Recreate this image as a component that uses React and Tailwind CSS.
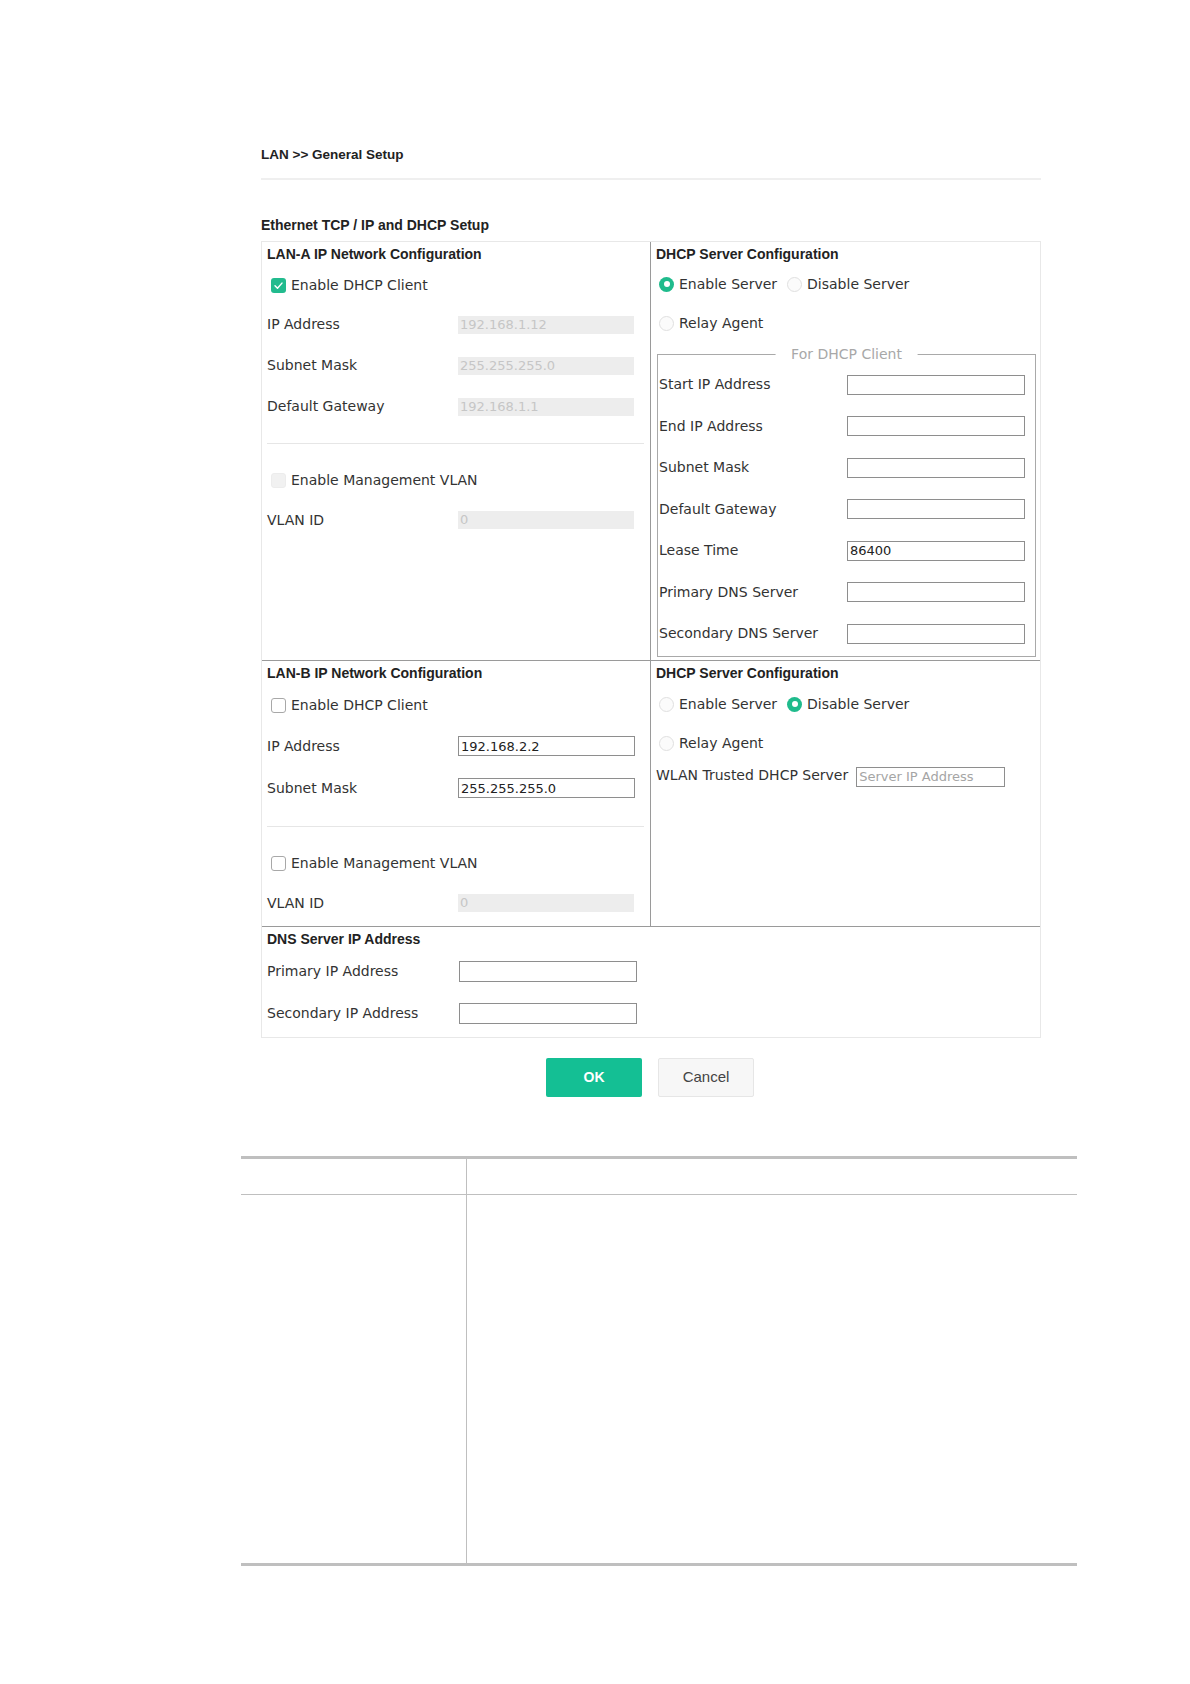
import React from "react";

const label = "font-['DejaVu_Sans',sans-serif] text-[14px] text-[#333] whitespace-nowrap";
const headFont = "font-['Liberation_Sans',Arial,sans-serif] font-bold text-[#222] whitespace-nowrap";
const heading = `${headFont} text-[14px]`;

const Check = ({ state }) => {
  if (state === "on") {
    return (
      <span className="flex h-[15px] w-[15px] items-center justify-center rounded-[3px] bg-[#22bb8e]">
        <svg width="11" height="11" viewBox="0 0 12 12" fill="none">
          <path d="M2.2 6.3 L4.9 8.9 L9.8 3.4" stroke="#fff" strokeWidth="1.6" strokeLinecap="round" strokeLinejoin="round" />
        </svg>
      </span>
    );
  }
  if (state === "disabled") {
    return <span className="block h-[15px] w-[15px] rounded-[3px] border border-[#ececec] bg-[#f1f1f1]" />;
  }
  return <span className="block h-[15px] w-[15px] rounded-[3px] border border-[#a8a8a8] bg-white" />;
};

const Radio = ({ on }) =>
  on ? (
    <span className="flex h-[15px] w-[15px] items-center justify-center rounded-full bg-[#1fbb8c]">
      <span className="block h-[6px] w-[6px] rounded-full bg-white" />
    </span>
  ) : (
    <span className="block h-[15px] w-[15px] rounded-full border border-[#e0e0e0] bg-[#fbfbfb]" />
  );

const Field = ({ value = "", disabled, w = "w-[176px]", h = "h-[20px]", placeholder }) =>
  disabled ? (
    <div className={`${w} ${h} flex items-center bg-[#ededed] pl-[2px] font-['DejaVu_Sans',sans-serif] text-[13px] text-[#c6c6c6]`}>
      {value}
    </div>
  ) : (
    <input
      readOnly
      value={value}
      placeholder={placeholder}
      className={`${w} ${h} box-border border border-[#8e8e8e] bg-white px-[2px] font-['DejaVu_Sans',sans-serif] text-[13px] text-[#222] outline-none placeholder:text-[#a5a5a5]`}
    />
  );

const Row = ({ name, lw = "w-[191px]", height = "h-[41px]", children }) => (
  <div className={`flex ${height} items-center`}>
    <span className={`${label} ${lw} shrink-0`}>{name}</span>
    {children}
  </div>
);

const CheckRow = ({ state, text, height }) => (
  <div className={`flex ${height} items-center pl-[4px]`}>
    <Check state={state} />
    <span className={`${label} ml-[5px]`}>{text}</span>
  </div>
);

const ServerRadios = ({ enabled, height }) => (
  <div className={`flex ${height} items-center pl-[3px]`}>
    <Radio on={enabled} />
    <span className={`${label} ml-[5px]`}>Enable Server</span>
    <span className="ml-[10px]">
      <Radio on={!enabled} />
    </span>
    <span className={`${label} ml-[5px]`}>Disable Server</span>
  </div>
);

export default function App() {
  return (
    <div className="min-h-[1684px] w-[1190px] bg-white">
      <div className="ml-[261px] w-[780px] pt-[145px]">
        <div className={`${headFont} text-[13.5px] leading-[20px]`}>LAN &gt;&gt; General Setup</div>
        <div className="mt-[13px] h-[2px] bg-[#efefef]" />
        <div className={`${heading} mt-[35px] leading-[20px]`}>Ethernet TCP / IP and DHCP Setup</div>

        <div className="mt-[6px] border border-[#e8e8e8]">
          {/* LAN-A */}
          <div className="grid grid-cols-[389px_389px] border-b border-[#9a9a9a]">
            <div className="h-[418px] border-r border-[#9a9a9a] pl-[5px] pr-[6px]">
              <div className={`${heading} flex h-[24px] items-center`}>LAN-A IP Network Configuration</div>
              <CheckRow state="on" text="Enable DHCP Client" height="h-[38px]" />
              <Row name="IP Address">
                <Field disabled value="192.168.1.12" h="h-[18px]" />
              </Row>
              <Row name="Subnet Mask">
                <Field disabled value="255.255.255.0" h="h-[18px]" />
              </Row>
              <Row name="Default Gateway">
                <Field disabled value="192.168.1.1" h="h-[18px]" />
              </Row>
              <div className="mt-[16px] h-px bg-[#e6e6e6]" />
              <div className="mt-[16px]">
                <CheckRow state="disabled" text="Enable Management VLAN" height="h-[40px]" />
                <Row name="VLAN ID" height="h-[40px]">
                  <Field disabled value="0" h="h-[18px]" />
                </Row>
              </div>
            </div>

            <div className="h-[418px] pl-[5px] pr-[4px]">
              <div className={`${heading} flex h-[24px] items-center`}>DHCP Server Configuration</div>
              <ServerRadios enabled height="h-[36px]" />
              <div className="flex h-[42px] items-center pl-[3px]">
                <Radio />
                <span className={`${label} ml-[5px]`}>Relay Agent</span>
              </div>
              <div className="relative ml-[1px] mt-[10px] border border-[#a9a9a9] pb-[1px] pl-[1px] pt-[9px]">
                <span className="absolute -top-[11px] left-1/2 -translate-x-1/2 bg-white px-[16px] font-['DejaVu_Sans',sans-serif] text-[14px] leading-[20px] text-[#a8a8a8] whitespace-nowrap">
                  For DHCP Client
                </span>
                {[
                  ["Start IP Address", ""],
                  ["End IP Address", ""],
                  ["Subnet Mask", ""],
                  ["Default Gateway", ""],
                  ["Lease Time", "86400"],
                  ["Primary DNS Server", ""],
                  ["Secondary DNS Server", ""],
                ].map(([n, v]) => (
                  <Row key={n} name={n} lw="w-[188px]" height="h-[41.5px]">
                    <Field value={v} w="w-[178px]" />
                  </Row>
                ))}
              </div>
            </div>
          </div>

          {/* LAN-B */}
          <div className="grid grid-cols-[389px_389px] border-b border-[#9a9a9a]">
            <div className="h-[265px] border-r border-[#9a9a9a] pl-[5px] pr-[6px]">
              <div className={`${heading} flex h-[24px] items-center`}>LAN-B IP Network Configuration</div>
              <CheckRow state="off" text="Enable DHCP Client" height="h-[40px]" />
              <Row name="IP Address" height="h-[42px]">
                <Field value="192.168.2.2" w="w-[177px]" />
              </Row>
              <Row name="Subnet Mask" height="h-[42px]">
                <Field value="255.255.255.0" w="w-[177px]" />
              </Row>
              <div className="mt-[17px] h-px bg-[#e6e6e6]" />
              <div className="mt-[16px]">
                <CheckRow state="off" text="Enable Management VLAN" height="h-[40px]" />
                <Row name="VLAN ID" height="h-[40px]">
                  <Field disabled value="0" h="h-[18px]" />
                </Row>
              </div>
            </div>

            <div className="h-[265px] pl-[5px] pr-[4px]">
              <div className={`${heading} flex h-[24px] items-center`}>DHCP Server Configuration</div>
              <ServerRadios enabled={false} height="h-[38px]" />
              <div className="flex h-[40px] items-center pl-[3px]">
                <Radio />
                <span className={`${label} ml-[5px]`}>Relay Agent</span>
              </div>
              <div className="flex h-[24px] items-center">
                <span className={label}>WLAN Trusted DHCP Server</span>
                <span className="ml-[8px]">
                  <Field placeholder="Server IP Address" w="w-[149px]" />
                </span>
              </div>
            </div>
          </div>

          {/* DNS */}
          <div className="h-[110px] pl-[5px]">
            <div className={`${heading} flex h-[24px] items-center`}>DNS Server IP Address</div>
            <Row name="Primary IP Address" lw="w-[192px]" height="h-[40px]">
              <Field w="w-[178px]" h="h-[21px]" />
            </Row>
            <Row name="Secondary IP Address" lw="w-[192px]" height="h-[44px]">
              <Field w="w-[178px]" h="h-[21px]" />
            </Row>
          </div>
        </div>

        <div className="mt-[20px] flex justify-center gap-[16px] pr-[2px]">
          <button className="h-[39px] w-[96px] rounded-[2px] bg-[#14bf94] font-['Liberation_Sans',Arial,sans-serif] text-[14px] font-bold text-white">
            OK
          </button>
          <button className="h-[39px] w-[96px] rounded-[2px] border border-[#e6e6e6] bg-[#f7f7f7] font-['Liberation_Sans',Arial,sans-serif] text-[15px] text-[#444]">
            Cancel
          </button>
        </div>
      </div>

      <div className="ml-[241px] mt-[59px] grid w-[836px] grid-cols-[226px_1fr] border-b-[3px] border-t-[3px] border-[#bfbfbf]">
        <div className="h-[36px] border-b border-r border-[#bfbfbf]" />
        <div className="h-[36px] border-b border-[#bfbfbf]" />
        <div className="h-[368px] border-r border-[#bfbfbf]" />
        <div className="h-[368px]" />
      </div>
    </div>
  );
}
